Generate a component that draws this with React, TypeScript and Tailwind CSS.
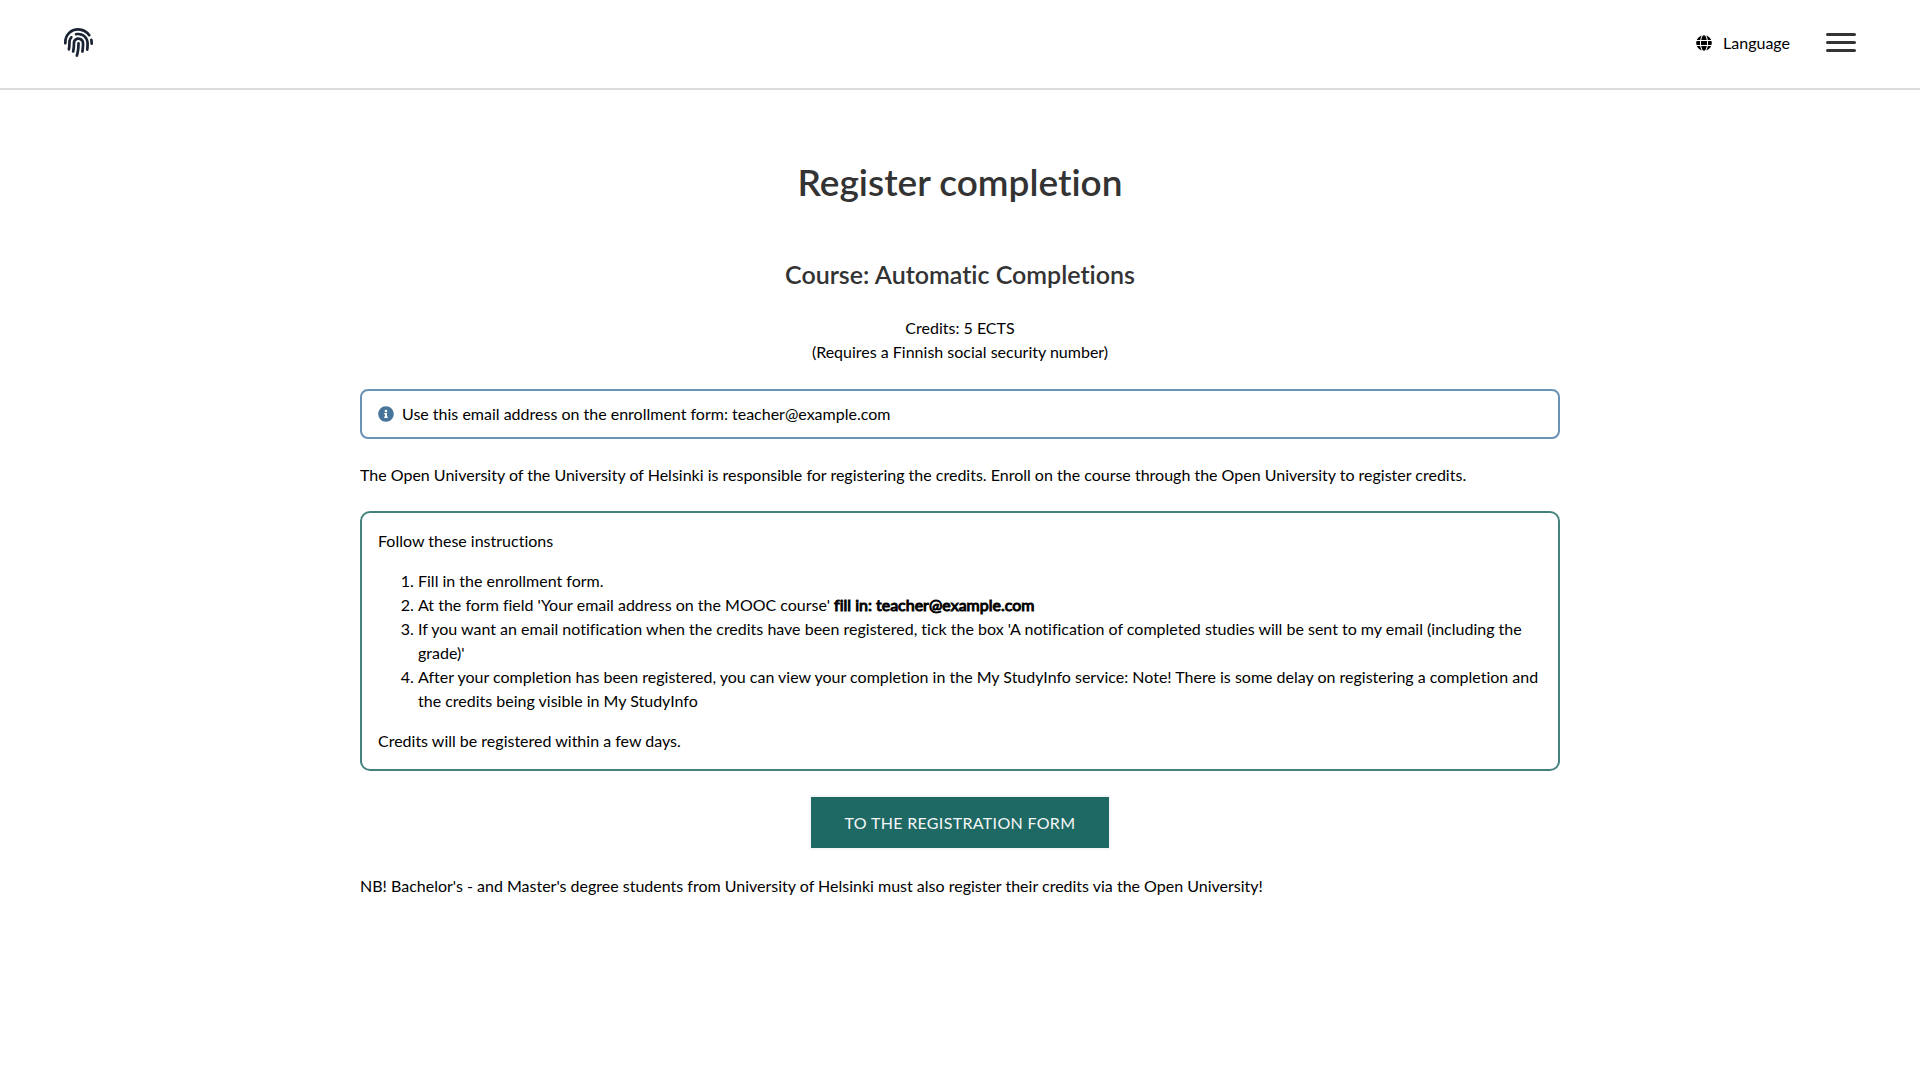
import { FaFingerprint, FaGlobe, FaInfoCircle } from "react-icons/fa";

const email = "teacher@example.com";

function Header() {
  return (
    <header className="flex h-[90px] items-start justify-between border-b-2 border-[#dcdcdc] px-16 pt-5">
      <a href="#home" aria-label="Home" className="mt-2 text-[#1a2333]">
        <FaFingerprint size={29} />
      </a>
      <nav className="flex items-start gap-9">
        <button type="button" className="flex h-[46px] items-center gap-[11px] text-black">
          <FaGlobe size={16} />
          <span>Language</span>
        </button>
        <button type="button" aria-label="Open menu" className="mt-[13px] flex w-[30px] flex-col gap-[5px]">
          <span className="h-[3px] w-full rounded-full bg-[#333]" />
          <span className="h-[3px] w-full rounded-full bg-[#333]" />
          <span className="h-[3px] w-full rounded-full bg-[#333]" />
        </button>
      </nav>
    </header>
  );
}

export default function App() {
  return (
    <div className="min-h-screen bg-white font-['Lato',sans-serif] text-base leading-6 text-black [font-variant-ligatures:none]">
      <Header />
      <main className="mx-auto mt-[70px] max-w-[1200px]">
        <h1 className="text-center text-[37px] leading-[44px] font-semibold text-[#333]">
          Register completion
        </h1>
        <h2 className="mt-[54px] text-center text-[25px] leading-8 font-semibold text-[#333]">
          Course: Automatic Completions
        </h2>
        <p className="mt-[26px] text-center">
          Credits: 5 ECTS
          <br />
          (Requires a Finnish social security number)
        </p>
        <div className="mt-[25px] flex h-[50px] items-center gap-2 rounded-lg border-2 border-[#6b93b5] px-4">
          <FaInfoCircle size={16} className="text-[#46749b]" />
          <p>Use this email address on the enrollment form: {email}</p>
        </div>
        <p className="mt-6">
          The Open University of the University of Helsinki is responsible for registering the
          credits. Enroll on the course through the Open University to register credits.
        </p>
        <section className="mt-6 rounded-[10px] border-2 border-[#44827e] p-4">
          <p>Follow these instructions</p>
          <ol className="my-4 list-decimal pl-10">
            <li>Fill in the enrollment form.</li>
            <li>
              At the form field 'Your email address on the MOOC course'{" "}
              <strong className="font-normal [-webkit-text-stroke:1px_black]">fill in: {email}</strong>
            </li>
            <li>
              If you want an email notification when the credits have been registered, tick the box
              'A notification of completed studies will be sent to my email (including the grade)'
            </li>
            <li>
              After your completion has been registered, you can view your completion in the My
              StudyInfo service: Note! There is some delay on registering a completion and the
              credits being visible in My StudyInfo
            </li>
          </ol>
          <p>Credits will be registered within a few days.</p>
        </section>
        <div className="mt-6 flex justify-center">
          <a
            href="#registration"
            className="border-2 border-[#f5f6f7] bg-[#1f6964] px-[34px] py-[13px] leading-[25px] tracking-[0.02em] text-[#f5f6f7] uppercase"
          >
            To the registration form
          </a>
        </div>
        <p className="mt-6">
          NB! Bachelor's - and Master's degree students from University of Helsinki must also
          register their credits via the Open University!
        </p>
      </main>
    </div>
  );
}
